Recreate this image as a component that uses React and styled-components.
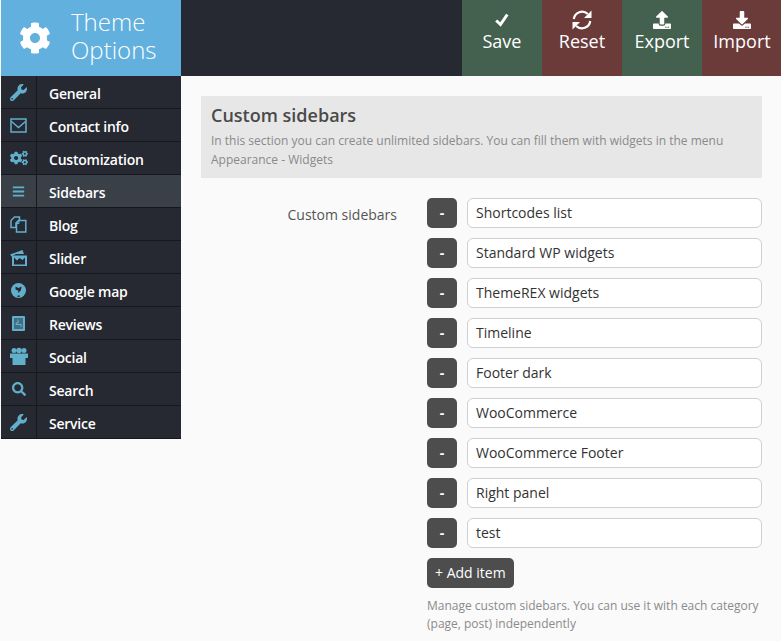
import React from "react";
import styled, { createGlobalStyle } from "styled-components";
import { FaCog, FaUpload, FaDownload, FaWrench, FaCogs, FaBars, FaSearch } from "react-icons/fa";

const Global = createGlobalStyle`
  html, body { margin: 0; padding: 0; background: #fafafa; }
  body { font-family: "Open Sans", "Liberation Sans", sans-serif; width: 781px; height: 641px; overflow: hidden; }
`;

const Page = styled.div`
  width: 781px;
  height: 641px;
  overflow: hidden;
`;

const Header = styled.header`
  display: flex;
  height: 76px;
  margin-left: 1px;
  background: #262932;
`;

const Logo = styled.div`
  display: flex;
  align-items: center;
  width: 180px;
  padding-left: 18px;
  box-sizing: border-box;
  background: #62b0de;
  color: #fff;
  svg { width: 32px; height: 32px; flex: none; margin-top: -1px; }
`;

const LogoText = styled.div`
  margin: -4px 0 0 20px;
  font-size: 24px;
  line-height: 28px;
  font-weight: 300;
`;

const Actions = styled.div`
  display: flex;
  flex: none;
  margin-left: auto;
  margin-right: -1px;
`;

const Action = styled.div`
  display: flex;
  flex-direction: column;
  align-items: center;
  width: 80px;
  padding-top: 11px;
  box-sizing: border-box;
  background: ${p => (p.$good ? "#44614f" : "#6b3b3a")};
  color: #fff;
  font-size: 18px;
  line-height: 24px;
`;

const ActionIcon = styled.div`
  display: flex;
  align-items: center;
  justify-content: center;
  height: 18px;
  svg { width: ${p => p.$size}px; height: ${p => p.$size}px; flex: none; display: block; }
`;

const Body = styled.div`
  display: flex;
  padding-left: 1px;
`;

const Menu = styled.nav`
  width: 180px;
  flex: none;
  align-self: flex-start;
`;

const Item = styled.div`
  display: flex;
  height: 33px;
  box-sizing: border-box;
  border-bottom: 1px solid #17181d;
  background: ${p => (p.$active ? "#3a4048" : "#262932")};
  color: #fff;
  font-size: 14px;
  font-weight: 600;
  letter-spacing: -0.23px;
`;

const IconCell = styled.div`
  display: flex;
  align-items: center;
  justify-content: center;
  width: 36px;
  flex: none;
  box-sizing: border-box;
  border-right: 1px solid #17181d;
  color: #62afcb;
  svg { width: ${p => p.$size || 17}px; height: ${p => p.$size || 17}px; display: block; }
`;

const ItemLabel = styled.div`
  padding-left: 12px;
  line-height: 33px;
  margin-top: 1px;
`;

const Main = styled.main`
  flex: 1;
  padding: 20px 19px 0 20px;
  min-width: 0;
`;

const Section = styled.section`
  height: 82px;
  box-sizing: border-box;
  padding: 7px 10px 0;
  background: #e7e7e7;
`;

const Title = styled.h2`
  margin: 0;
  color: #4a4a4a;
  font-size: 18px;
  line-height: 24px;
  font-weight: 600;
`;

const Desc = styled.p`
  margin: 4px 0 0;
  color: #8a8a8a;
  font-size: 12px;
  line-height: 19px;
`;

const Form = styled.div`
  display: flex;
  margin-top: 20px;
`;

const FieldLabel = styled.div`
  width: 196px;
  flex: none;
  text-align: right;
  color: #555;
  font-size: 14px;
  line-height: 34px;
`;

const Fields = styled.div`
  flex: 1;
  margin-left: 30px;
  min-width: 0;
`;

const Row = styled.div`
  display: flex;
  gap: 10px;
  margin-bottom: 10px;
`;

const Minus = styled.div`
  width: 30px;
  height: 30px;
  flex: none;
  border-radius: 5px;
  background: #4d4d4d;
  color: #fff;
  font-size: 14px;
  font-weight: 700;
  line-height: 30px;
  text-align: center;
`;

const Field = styled.div`
  flex: 1;
  height: 30px;
  box-sizing: border-box;
  padding-left: 8px;
  border: 1px solid #d0d0d0;
  border-radius: 6px;
  background: #fff;
  color: #333;
  font-size: 14px;
  line-height: 28px;
`;

const AddButton = styled.div`
  display: inline-block;
  height: 30px;
  padding: 0 8px;
  border-radius: 5px;
  background: #4d4d4d;
  color: #fff;
  font-size: 14px;
  line-height: 30px;
`;

const Help = styled.p`
  margin: 9px 0 0;
  color: #8a8a8a;
  font-size: 12px;
  line-height: 18px;
`;

// icons the packages don't have in this shape
const Check = () => (
  <svg viewBox="0 0 14 14" fill="none" stroke="currentColor" strokeWidth="3">
    <path d="M1.2 7.5 5.5 11.5 12.3 1.5" />
  </svg>
);

const Refresh = () => (
  <svg viewBox="0 0 20 20">
    <g fill="none" stroke="currentColor" strokeWidth="2.2">
      <path d="M1.8 9A8.3 8.3 0 0 1 15.8 4" />
      <path d="M18.2 11A8.3 8.3 0 0 1 4.2 16" />
    </g>
    <path d="M19.5 0.5V8H12ZM0.5 19.5V12H8Z" fill="currentColor" />
  </svg>
);

const Envelope = () => (
  <svg viewBox="0 0 17 17" fill="none" stroke="currentColor" strokeWidth="1.5">
    <rect x="1" y="2" width="15" height="13" />
    <path d="M1.5 4.5 8.5 10.5 15.5 4.5" />
  </svg>
);

const Docs = () => (
  <svg viewBox="0 0 17 17" fill="none" stroke="currentColor" strokeWidth="1.5">
    <path d="M4.5 1 9.5 1V3.5L6 7V11.5H1V4.5Z" />
    <path d="M9 4.5H15.8V16H6.5V7Z" />
    <path d="M9 5V7.5H6.5" strokeWidth="1" />
  </svg>
);

const Photos = () => (
  <svg viewBox="0 0 17 17" fill="currentColor">
    <path d="M0 5.5 12.5 1 14 5H6L3 6.5V9Z" />
    <path fillRule="evenodd" d="M2 6.5H17V17H2ZM4 8.5V15.5H15V8.5L12.5 11 9.5 9 7 11.5 5.5 10Z" />
  </svg>
);

const Globe = () => (
  <svg viewBox="0 0 17 17">
    <circle cx="8.5" cy="8.5" r="7.5" fill="currentColor" />
    <path d="M5.5 4.5 8.5 6 11.5 4.5 11 8 8.5 11 8 8.5 5.5 7.5Z" fill="#262932" />
    <path d="M7.5 13.5H10L9.5 15H7.5Z" fill="#262932" />
  </svg>
);

const Tablet = () => (
  <svg viewBox="0 0 17 17">
    <rect x="2" y="1" width="13" height="15" rx="1" fill="currentColor" />
    <rect x="4" y="3" width="9" height="11" fill="#3f6f84" />
    <path d="M8 4.5V8H6V9.5H11V12" fill="none" stroke="#86bdd2" strokeWidth="0.8" />
  </svg>
);

const Group = () => (
  <svg viewBox="0 0 18 18" fill="currentColor">
    <circle cx="4" cy="3.5" r="2.5" />
    <circle cx="14" cy="3.5" r="2.5" />
    <circle cx="9" cy="3.5" r="2.8" />
    <path d="M0 6.5H18V11H15.5V18H2.5V11H0Z" />
  </svg>
);

const actions = [
  { label: "Save", icon: <Check />, size: 14, good: true },
  { label: "Reset", icon: <Refresh />, size: 20 },
  { label: "Export", icon: <FaUpload />, size: 18, good: true },
  { label: "Import", icon: <FaDownload />, size: 18 },
];

const menu = [
  { label: "General", icon: <FaWrench /> },
  { label: "Contact info", icon: <Envelope /> },
  { label: "Customization", icon: <FaCogs />, size: 18 },
  { label: "Sidebars", icon: <FaBars />, size: 13 },
  { label: "Blog", icon: <Docs /> },
  { label: "Slider", icon: <Photos /> },
  { label: "Google map", icon: <Globe /> },
  { label: "Reviews", icon: <Tablet /> },
  { label: "Social", icon: <Group />, size: 18 },
  { label: "Search", icon: <FaSearch />, size: 14 },
  { label: "Service", icon: <FaWrench /> },
];

const sidebars = [
  "Shortcodes list",
  "Standard WP widgets",
  "ThemeREX widgets",
  "Timeline",
  "Footer dark",
  "WooCommerce",
  "WooCommerce Footer",
  "Right panel",
  "test",
];

export default function App() {
  return (
    <Page>
      <Global />
      <Header>
        <Logo>
          <FaCog />
          <LogoText>Theme<br />Options</LogoText>
        </Logo>
        <Actions>
          {actions.map(a => (
            <Action key={a.label} $good={a.good}>
              <ActionIcon $size={a.size}>{a.icon}</ActionIcon>
              {a.label}
            </Action>
          ))}
        </Actions>
      </Header>
      <Body>
        <Menu>
          {menu.map(m => (
            <Item key={m.label} $active={m.label === "Sidebars"}>
              <IconCell $size={m.size}>{m.icon}</IconCell>
              <ItemLabel>{m.label}</ItemLabel>
            </Item>
          ))}
        </Menu>
        <Main>
          <Section>
            <Title>Custom sidebars</Title>
            <Desc>In this section you can create unlimited sidebars. You can fill them with widgets in the menu Appearance - Widgets</Desc>
          </Section>
          <Form>
            <FieldLabel>Custom sidebars</FieldLabel>
            <Fields>
              {sidebars.map(s => (
                <Row key={s}>
                  <Minus>-</Minus>
                  <Field>{s}</Field>
                </Row>
              ))}
              <AddButton>+ Add item</AddButton>
              <Help>Manage custom sidebars. You can use it with each category (page, post) independently</Help>
            </Fields>
          </Form>
        </Main>
      </Body>
    </Page>
  );
}
